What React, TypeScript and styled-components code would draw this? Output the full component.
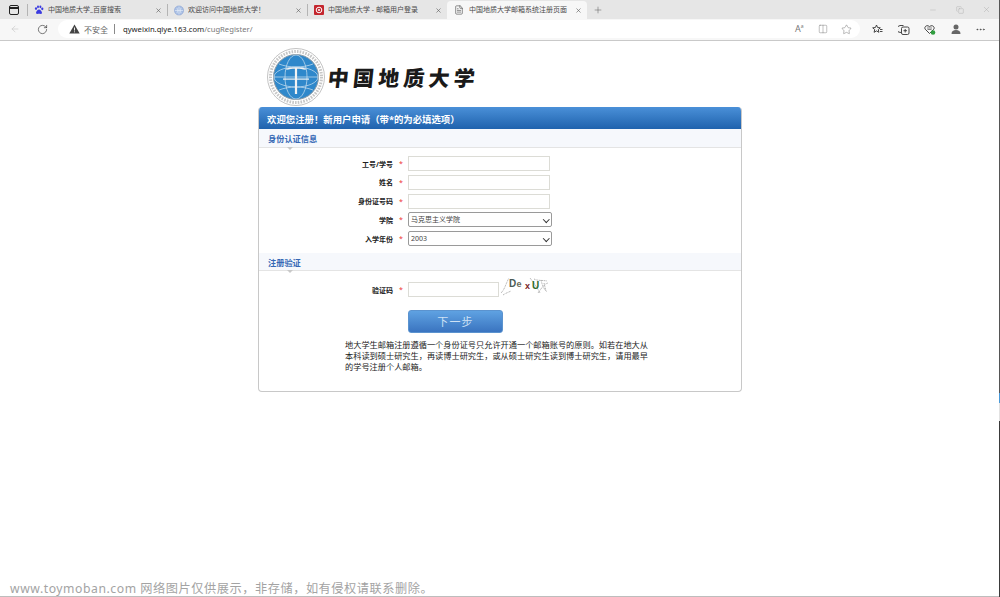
import * as React from 'react';
import styled, { createGlobalStyle } from 'styled-components';
import {
  ArrowLeft,
  RotateCw,
  Star,
  X,
  Plus,
  Minus,
  Copy,
  Ellipsis,
  FileText,
  Columns2,
} from 'lucide-react';

const GlobalStyle = createGlobalStyle`
  html, body {
    margin: 0;
    padding: 0;
    background: #ffffff;
    overflow: hidden;
  }
  * {
    box-sizing: border-box;
  }
`;

const Page = styled.div`
  position: relative;
  width: 1000px;
  height: 597px;
  overflow: hidden;
  display: flex;
  flex-direction: column;
  font-family: 'Noto Sans', 'Noto Sans CJK SC', sans-serif;
  color: #222;
`;

const TabStrip = styled.div`
  height: 19px;
  flex: none;
  background: #e6e6e6;
  display: flex;
  align-items: flex-end;
`;

const SidebarButton = styled.div`
  width: 27px;
  height: 19px;
  flex: none;
  display: flex;
  align-items: center;
  justify-content: center;
  padding-top: 1px;
`;

const TabDivider = styled.span`
  width: 1px;
  height: 12px;
  flex: none;
  align-self: center;
  margin-top: 1px;
  background: #b4b4b4;
`;

const Tab = styled.div<{ $active?: boolean }>`
  width: ${p => (p.$active ? '140px' : '139px')};
  height: 18px;
  flex: none;
  display: flex;
  align-items: center;
  padding: 0 5px 0 ${p => (p.$active ? '7px' : '6px')};
  background: ${p => (p.$active ? '#f7f7f7' : 'transparent')};
  border-radius: 4px 4px 0 0;
`;

const TabTitle = styled.span<{ $active?: boolean }>`
  flex: 1;
  margin-left: ${p => (p.$active ? '5px' : '4px')};
  font-size: 7px;
  line-height: 10px;
  color: #4a4a4a;
  white-space: nowrap;
  overflow: hidden;
`;

const Favicon = styled.span`
  width: 10px;
  height: 10px;
  flex: none;
  display: flex;
`;

const NewTab = styled.div`
  width: 22px;
  height: 18px;
  display: flex;
  align-items: center;
  justify-content: center;
`;

const WindowControls = styled.div`
  margin-left: auto;
  height: 19px;
  display: flex;
  align-items: center;
  gap: 18.5px;
  padding-right: 9px;
`;

const Toolbar = styled.div`
  height: 22px;
  flex: none;
  background: #f7f7f7;
  border-bottom: 1px solid #c9c9c9;
  display: flex;
  align-items: center;
  padding: 0 11px 1px 10px;
`;

const NavGroup = styled.div`
  width: 48px;
  display: flex;
  align-items: center;
  gap: 17px;
  flex: none;
`;

const AddressBar = styled.div`
  width: 802px;
  height: 18px;
  flex: none;
  background: #ffffff;
  border-radius: 9px;
  display: flex;
  align-items: center;
  padding: 0 8px 0 11px;
  font-size: 7.65px;
`;

const Insecure = styled.span`
  margin-left: 4px;
  font-size: 8px;
  color: #666;
`;

const Divider = styled.span`
  width: 1px;
  height: 10px;
  margin: 0 8px 0 6px;
  background: #8a8a8a;
`;

const Host = styled.span`
  color: #222;
`;

const UrlPath = styled.span`
  color: #777;
`;

const AddressIcons = styled.div`
  margin-left: auto;
  display: flex;
  align-items: center;
  gap: 13px;
`;

const ReadAloud = styled.span`
  width: 10px;
  font-size: 9px;
  line-height: 10px;
  color: #777;
  white-space: nowrap;
`;

const ReadAloudMark = styled.sup`
  font-size: 5px;
  line-height: 0;
`;

const ToolIcons = styled.div`
  display: flex;
  align-items: center;
  gap: 14.5px;
  margin-left: 12px;
`;

const Content = styled.main`
  flex: 1;
  display: flex;
  flex-direction: column;
  align-items: center;
`;

const LogoRow = styled.div`
  width: 484px;
  height: 66px;
  padding: 5px 0 0 9px;
  display: flex;
  align-items: center;
`;

const LogoText = styled.div`
  margin-left: 3px;
  font-family: 'Noto Sans CJK SC', sans-serif;
  font-weight: 900;
  font-size: 21px;
  letter-spacing: 4.2px;
  line-height: 30px;
  color: #1a1a1a;
  transform: skewX(-6deg);
`;

const Card = styled.section`
  width: 484px;
  height: 285px;
  background: #fff;
  border: 1px solid #c8c8c8;
  border-top: none;
  border-radius: 4px;
  overflow: hidden;
`;

const CardHeader = styled.header`
  height: 22px;
  background: linear-gradient(#4a90d8, #1f62ad);
  padding: 0 8px;
  color: #fff;
  font-size: 9.4px;
  font-weight: 700;
  line-height: 25px;
  white-space: nowrap;
`;

const SectionTitle = styled.div<{ $height: number }>`
  position: relative;
  height: ${p => p.$height}px;
  background: #f6f8fc;
  border-bottom: 1px solid #e4e4e4;
  padding-left: 9px;
  color: #3568b5;
  font-size: 8.2px;
  font-weight: 700;
  line-height: 19px;
  &::after {
    content: '';
    position: absolute;
    left: 28px;
    top: ${p => p.$height - 1}px;
    border: 3px solid transparent;
    border-top: 3px solid #c8c8c8;
  }
`;

const FormGrid = styled.div<{ $pad: string }>`
  padding: ${p => p.$pad};
  display: flex;
  flex-direction: column;
  gap: 3.75px;
`;

const Row = styled.div`
  display: flex;
  align-items: center;
  height: 15px;
`;

const Label = styled.label`
  width: 134px;
  text-align: right;
  font-size: 7px;
  font-weight: 700;
  color: #222;
  white-space: nowrap;
`;

const Required = styled.span`
  width: 15px;
  text-align: center;
  padding-left: 1px;
  font-size: 7px;
  color: #e33;
`;

const TextField = styled.input<{ $width: number }>`
  width: ${p => p.$width}px;
  height: 15px;
  padding: 0 2px;
  background: #fff;
  border: 1px solid #dcdcd6;
  border-radius: 0;
  outline: none;
`;

const SelectWrap = styled.div`
  position: relative;
  width: 144px;
  height: 15px;
  &::after {
    content: '';
    position: absolute;
    right: 3.5px;
    top: 4.5px;
    width: 3.5px;
    height: 3.5px;
    border-right: 1.2px solid #333;
    border-bottom: 1.2px solid #333;
    transform: rotate(45deg);
    pointer-events: none;
  }
`;

const Select = styled.select`
  appearance: none;
  display: block;
  width: 100%;
  height: 15px;
  padding: 0 0 0 2px;
  font-family: 'Noto Sans', 'Noto Sans CJK SC', sans-serif;
  font-size: 7px;
  color: #444;
  background: #fff;
  border: 1px solid #9a9a9a;
  border-radius: 2px;
  outline: none;
`;

const Captcha = styled.svg`
  width: 50px;
  height: 20px;
  margin: -6px 0 0 1px;
  flex: none;
`;

const SubmitRow = styled.div`
  padding: 12px 0 0 149px;
`;

const SubmitButton = styled.button`
  width: 95px;
  height: 23px;
  padding: 0;
  border: 1px solid #5b93cf;
  border-radius: 3px;
  background: linear-gradient(#5fa2e2, #3a74c0);
  color: #cfe2f5;
  font-family: 'Noto Sans CJK SC', sans-serif;
  font-size: 11px;
  letter-spacing: 1.2px;
`;

const Notice = styled.p`
  width: 306px;
  margin: 6px 0 0 86px;
  font-size: 8.2px;
  line-height: 11px;
  color: #222;
`;

const Watermark = styled.div`
  position: absolute;
  left: 10px;
  bottom: 0;
  height: 16px;
  font-size: 12.2px;
  line-height: 16px;
  letter-spacing: 0.55px;
  color: #a3a3a3;
  white-space: nowrap;
`;

const BottomLine = styled.div`
  position: absolute;
  left: 0;
  right: 0;
  bottom: 0;
  height: 1px;
  background: #bdbdbd;
`;

const EdgeStrip = styled.div`
  position: absolute;
  top: 0;
  right: 0;
  width: 1px;
  height: 597px;
  background: linear-gradient(
    #555 0,
    #555 393px,
    #4a9ad8 393px,
    #4a9ad8 403px,
    #e2e2e2 403px,
    #e2e2e2 421px,
    #3a3a3a 421px
  );
`;

const tabs = [
  { title: '中国地质大学_百度搜索', icon: 'paw' },
  { title: '欢迎访问中国地质大学！', icon: 'globe' },
  { title: '中国地质大学 - 邮箱用户登录', icon: 'mail' },
];

const identityFields = [
  { label: '工号/学号' },
  { label: '姓名' },
  { label: '身份证号码' },
];

function TabIcon({ kind }: { kind: string }) {
  if (kind === 'paw') {
    return (
      <svg width="10" height="10" viewBox="0 0 10 10">
        <g fill="#3b3be0">
          <ellipse cx="2" cy="3.6" rx="1.1" ry="1.4" />
          <ellipse cx="4" cy="1.8" rx="1" ry="1.4" />
          <ellipse cx="6.4" cy="1.8" rx="1" ry="1.4" />
          <ellipse cx="8.3" cy="3.8" rx="1.1" ry="1.4" />
          <path d="M5 4.600c1.400 0 3 2 3 3.400C8 9.300 6 8.800 5 8.800S2 9.300 2 8c0-1.400 1.600-3.400 3-3.400z" />
        </g>
      </svg>
    );
  }
  if (kind === 'globe') {
    return (
      <svg width="11" height="11" viewBox="0 0 11 11">
        <circle cx="5.5" cy="5.5" r="5" fill="#a9bfe4" stroke="#7d9ad0" strokeWidth=".6" />
        <path d="M1 5.500h9M5.500 1v9M3 2.500c1.500 2 1.500 4 0 6M8 2.500c-1.500 2-1.500 4 0 6" stroke="#eef3fb" strokeWidth=".6" fill="none" />
      </svg>
    );
  }
  return (
    <svg width="10" height="10" viewBox="0 0 10 10">
      <rect width="10" height="10" rx="1" fill="#c4262e" />
      <circle cx="5" cy="5" r="2.800" fill="none" stroke="#fff" strokeWidth="1" />
      <circle cx="5" cy="5" r="1" fill="#fff" />
    </svg>
  );
}

function CloseIcon() {
  return <X size={7} color="#555" strokeWidth={2} />;
}

function Seal() {
  return (
    <svg width="58" height="58" viewBox="0 0 58 58">
      <circle cx="29" cy="29" r="28.500" fill="#fff" stroke="#b4b4b4" strokeWidth=".8" />
      <circle cx="29" cy="29" r="25.500" fill="none" stroke="#c6c6c6" strokeWidth="3" strokeDasharray="1.600 1.200" />
      <circle cx="29" cy="29" r="22.500" fill="#2f88cb" stroke="#8e9aa3" strokeWidth="1" />
      <g fill="none" stroke="#cfe3f1" strokeWidth=".7">
        <ellipse cx="29" cy="29" rx="22" ry="10" />
        <ellipse cx="29" cy="29" rx="11" ry="22" />
        <path d="M7 29h44M12 16c10 4 24 4 34 0M12 42c10-4 24-4 34 0" />
      </g>
      <path d="M19 20.500c6.500-1.800 13.500-1.800 20 0l-.4 1.300c-2.800-.7-6-1-8.500-1.100V46h-2.200V20.700c-2.500.1-5.700.4-8.500 1.100z" fill="#f2f2f2" />
      <path d="M16 30.500h26v1.200H16z" fill="#f2f2f2" />
    </svg>
  );
}

function CaptchaImage() {
  return (
    <Captcha viewBox="0 0 50 20">
      <g stroke="#777" strokeWidth=".6" fill="none" strokeDasharray="1 .7">
        <path d="M1 16C5 12 6 6 9 1M3 18c3-2 6-3 8-4M34 2c4 2 8 1 13 2M38 16c3-4 6-9 10-10M30 1c4 5 8 11 10 15M41 3c1 4 2 8 6 12M44 6l2 8" />
      </g>
      <text x="9" y="10" fontFamily="Liberation Sans" fontSize="10" fontWeight="700" fill="#4a5a55">D</text>
      <text x="16.500" y="10" fontFamily="Liberation Sans" fontSize="9" fontWeight="700" fill="#6a6a5a">e</text>
      <text x="25" y="12" fontFamily="Liberation Sans" fontSize="9" fontWeight="700" fill="#7a1f1f">x</text>
      <text x="32" y="12" fontFamily="Liberation Sans" fontSize="10" fontWeight="700" fill="#2f6a2a">U</text>
    </Captcha>
  );
}

function StarList() {
  return (
    <svg width="11" height="11" viewBox="0 0 11 11" fill="none" stroke="#333" strokeWidth=".9">
      <path d="M4.500 1l1.100 2.500 2.700.3-2 1.800.6 2.700-2.400-1.400-2.400 1.400.6-2.700-2-1.800 2.700-.3z" />
      <path d="M8 5.500h2.500M8 7.500h2.500" />
    </svg>
  );
}

function Collections() {
  return (
    <svg width="12" height="11" viewBox="0 0 12 11" fill="none" stroke="#333" strokeWidth=".9">
      <path d="M3 8.500A3.500 3.500 0 0 1 2 1.500h3.500" />
      <rect x="3.500" y="3" width="7.500" height="7.500" rx="1.500" />
      <path d="M7.200 5v3.500M5.500 6.700h3.500" />
    </svg>
  );
}

function HeartBadge() {
  return (
    <svg width="12" height="11" viewBox="0 0 12 11">
      <path d="M5.500 9.500L1.200 5.200C-.2 3 2.800.2 5.500 2.600 8.200.2 11.200 3 9.800 5.200z" fill="none" stroke="#333" strokeWidth=".9" />
      <path d="M3 4h5M3.500 5.500h4" stroke="#555" strokeWidth=".7" />
      <circle cx="9" cy="8.500" r="2.300" fill="#2f9e3f" />
    </svg>
  );
}

function Avatar() {
  return (
    <svg width="10" height="11" viewBox="0 0 10 11" fill="#666">
      <circle cx="5" cy="3" r="2.500" />
      <path d="M.5 10c0-3 1.800-4 4.500-4s4.500 1 4.500 4z" />
    </svg>
  );
}

function WarningIcon() {
  return (
    <svg width="11" height="10" viewBox="0 0 11 10">
      <path d="M5.500.5L10.700 9.500H.3z" fill="#444" />
      <path d="M5.500 3.500v3M5.500 7.400v.9" stroke="#fff" strokeWidth=".9" />
    </svg>
  );
}

export default function App() {
  return (
    <Page>
      <GlobalStyle />
      <TabStrip>
        <SidebarButton>
          <svg width="10" height="10" viewBox="0 0 10 10" fill="none" stroke="#222" strokeWidth="1">
            <rect x=".5" y=".5" width="9" height="9" rx="1.500" />
            <path d="M.5 3h9" strokeWidth="2" />
          </svg>
        </SidebarButton>
        {tabs.map(tab => (
          <React.Fragment key={tab.title}>
            <TabDivider />
            <Tab>
              <Favicon>
                <TabIcon kind={tab.icon} />
              </Favicon>
              <TabTitle>{tab.title}</TabTitle>
              <CloseIcon />
            </Tab>
          </React.Fragment>
        ))}
        <Tab $active>
          <Favicon>
            <FileText size={10} color="#444" strokeWidth={1.4} />
          </Favicon>
          <TabTitle $active>中国地质大学邮箱系统注册页面</TabTitle>
          <CloseIcon />
        </Tab>
        <NewTab>
          <Plus size={10} color="#555" strokeWidth={1.2} />
        </NewTab>
        <WindowControls>
          <Minus size={8} color="#aaa" strokeWidth={1.2} />
          <Copy size={8} color="#aaa" strokeWidth={1.2} />
          <X size={9} color="#aaa" strokeWidth={1.2} />
        </WindowControls>
      </TabStrip>
      <Toolbar>
        <NavGroup>
          <ArrowLeft size={10} color="#c4c4c4" strokeWidth={1.4} />
          <RotateCw size={11} color="#333" strokeWidth={1.4} />
        </NavGroup>
        <AddressBar>
          <WarningIcon />
          <Insecure>不安全</Insecure>
          <Divider />
          <Host>qyweixin.qiye.163.com</Host>
          <UrlPath>/cugRegister/</UrlPath>
          <AddressIcons>
            <ReadAloud>A<ReadAloudMark>a</ReadAloudMark></ReadAloud>
            <Columns2 size={10} color="#777" strokeWidth={1.1} />
            <Star size={11} color="#777" strokeWidth={1.1} />
          </AddressIcons>
        </AddressBar>
        <ToolIcons>
          <StarList />
          <Collections />
          <HeartBadge />
          <Avatar />
          <Ellipsis size={11} color="#444" strokeWidth={1.6} />
        </ToolIcons>
      </Toolbar>
      <Content>
        <LogoRow>
          <Seal />
          <LogoText>中国地质大学</LogoText>
        </LogoRow>
        <Card>
          <CardHeader>欢迎您注册！新用户申请（带*的为必填选项）</CardHeader>
          <SectionTitle $height={19}>身份认证信息</SectionTitle>
          <FormGrid $pad="8px 0 7px">
            {identityFields.map(field => (
              <Row key={field.label}>
                <Label>{field.label}</Label>
                <Required>*</Required>
                <TextField $width={142} />
              </Row>
            ))}
            <Row>
              <Label>学院</Label>
              <Required>*</Required>
              <SelectWrap>
                <Select defaultValue="马克思主义学院">
                  <option>马克思主义学院</option>
                </Select>
              </SelectWrap>
            </Row>
            <Row>
              <Label>入学年份</Label>
              <Required>*</Required>
              <SelectWrap>
                <Select defaultValue="2003">
                  <option>2003</option>
                </Select>
              </SelectWrap>
            </Row>
          </FormGrid>
          <SectionTitle $height={18}>注册验证</SectionTitle>
          <FormGrid $pad="11px 0 0">
            <Row>
              <Label>验证码</Label>
              <Required>*</Required>
              <TextField $width={91} />
              <CaptchaImage />
            </Row>
          </FormGrid>
          <SubmitRow>
            <SubmitButton>下一步</SubmitButton>
          </SubmitRow>
          <Notice>
            地大学生邮箱注册遵循一个身份证号只允许开通一个邮箱账号的原则。如若在地大从本科读到硕士研究生，再读博士研究生，或从硕士研究生读到博士研究生，请用最早的学号注册个人邮箱。
          </Notice>
        </Card>
      </Content>
      <BottomLine />
      <Watermark>www.toymoban.com 网络图片仅供展示，非存储，如有侵权请联系删除。</Watermark>
      <EdgeStrip />
    </Page>
  );
}
